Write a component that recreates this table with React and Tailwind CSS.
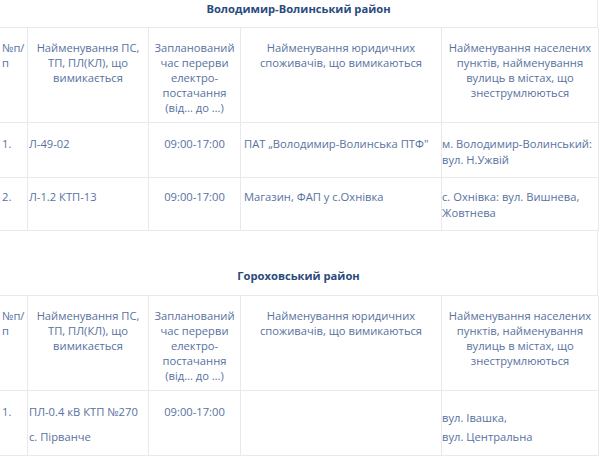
import React from "react";

const line = "border-[#e8e8ee]";
const txt = "text-[#5872a0]";

function Cell({ children, className = "" }) {
  return <div className={`border-b border-r ${line} ${className}`}>{children}</div>;
}

function Header() {
  return (
    <div className="grid grid-cols-[28px_121px_92px_201px_157px] h-[95px] text-[11.2px] leading-[15px]">
      <Cell className="pt-[12px] pl-[2px] h-[95px]">№п/ п</Cell>
      <Cell className="pt-[12px] px-[4px] text-center">Найменування ПС, ТП, ПЛ(КЛ), що вимикається</Cell>
      <Cell className="pt-[12px] px-[4px] text-center">Запланований час перерви електро-постачання (від… до …)</Cell>
      <Cell className="pt-[12px] px-[10px] text-center">Найменування юридичних споживачів, що вимикаються</Cell>
      <Cell className="pt-[12px] px-[2px] text-center">Найменування населених пунктів, найменування вулиць в містах, що знеструмлюються</Cell>
    </div>
  );
}

function Row({ h, pt, cols }) {
  return (
    <div className={`grid grid-cols-[28px_121px_92px_201px_157px] text-[11.2px] leading-[16px] ${h}`}>
      <Cell className={`${pt} pl-[2px]`}>{cols[0]}</Cell>
      <Cell className={`${pt} pl-[1px]`}>{cols[1]}</Cell>
      <Cell className={`${pt} text-center`}>{cols[2]}</Cell>
      <Cell className={`${pt} pl-[3px]`}>{cols[3]}</Cell>
      <Cell className={`${pt} pl-[0px]`}>{cols[4]}</Cell>
    </div>
  );
}

export default function App() {
  return (
    <div className={`w-[600px] h-[456px] overflow-hidden bg-white ${txt}`} style={{ fontFamily: '"Open Sans", "Noto Sans", sans-serif' }}>
      <div className="w-[598px]">
        <div className={`h-[28px] border-b border-r ${line} text-center font-bold text-[11.2px] leading-[15px] text-[#2a4a7e] pt-[1px]`}>
          Володимир-Волинський район
        </div>
        <Header />
        <Row
          h="h-[55px]"
          pt="pt-[13px]"
          cols={["1.", "Л-49-02", "09:00-17:00", "ПАТ „Володимир-Волинська ПТФ\"", "м. Володимир-Волинський: вул. Н.Ужвій"]}
        />
        <Row
          h="h-[53px]"
          pt="pt-[11px]"
          cols={["2.", "Л-1.2 КТП-13", "09:00-17:00", "Магазин, ФАП у с.Охнівка", "с. Охнівка: вул. Вишнева, Жовтнева"]}
        />
        <div className={`h-[65px] border-b border-r ${line} text-center font-bold text-[11.2px] leading-[15px] text-[#2a4a7e] pt-[37px]`}>
          Гороховський район
        </div>
        <Header />
        <div className="grid grid-cols-[28px_121px_92px_201px_157px] text-[11.2px] leading-[16px] h-[65px]">
          <Cell className="pt-[13px] pl-[2px]">1.</Cell>
          <Cell className="pt-[13px] pl-[1px]">
            <div>ПЛ-0.4 кВ КТП №270</div>
            <div className="mt-[9px]">с. Пірванче</div>
          </Cell>
          <Cell className="pt-[13px] text-center">09:00-17:00</Cell>
          <Cell className="pt-[13px]"></Cell>
          <Cell className="pt-[19px] pl-[0px]">
            <div>вул. Івашка,</div>
            <div className="mt-[3px]">вул. Центральна</div>
          </Cell>
        </div>
      </div>
    </div>
  );
}
